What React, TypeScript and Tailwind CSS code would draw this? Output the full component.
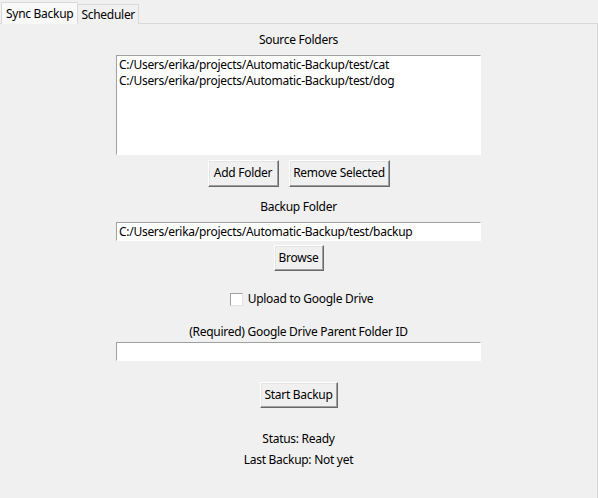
import React, { useState } from 'react';

const font = { fontFamily: '"Noto Sans", "DejaVu Sans", sans-serif' };

const TkButton: React.FC<{ label: string; width: string; height?: string }> = ({ label, width, height = 'h-[27px]' }) => (
  <button
    className={`${width} ${height} flex items-center justify-center pb-[1px] bg-[#f0f0f0] text-[12px] text-black border border-t-white border-l-white border-r-[#696969] border-b-[#696969] shadow-[inset_-1px_-1px_0_#a0a0a0,inset_1px_1px_0_#e3e3e3]`}
  >
    {label}
  </button>
);

const TkEntry: React.FC<{ value: string }> = ({ value }) => (
  <div className="w-[365px] h-[19px] bg-white border border-t-[#a0a0a0] border-l-[#a0a0a0] border-r-white border-b-white flex items-center px-[2px] text-[12px] text-black leading-none whitespace-nowrap overflow-hidden">
    {value}
  </div>
);

export default function App() {
  const [upload, setUpload] = useState(false);
  const folders = [
    'C:/Users/erika/projects/Automatic-Backup/test/cat',
    'C:/Users/erika/projects/Automatic-Backup/test/dog',
  ];

  return (
    <div className="w-[598px] h-[498px] bg-[#f0f0f0] flex flex-col text-black tracking-[-0.28px]" style={font}>
      {/* tab strip */}
      <div className="h-[24px] flex items-end pl-[1px] relative">
        <div className="h-[22px] px-[4px] bg-[#f9f9f9] border border-[#d9d9d9] border-b-0 flex items-center text-[12px] relative z-10">
          Sync Backup
        </div>
        <div className="h-[20px] px-[3px] bg-[#f0f0f0] border border-[#d9d9d9] border-l-0 border-b-0 flex items-center text-[12px]">
          Scheduler
        </div>
      </div>

      {/* panel */}
      <div className="flex-1 border-t border-r border-[#d9d9d9] flex flex-col items-center -mt-px">
        <div className="mt-[7px] h-[18px] flex items-center text-[12px]">Source Folders</div>

        <div className="mt-[6px] w-[365px] h-[100px] bg-white border border-t-[#a0a0a0] border-l-[#a0a0a0] border-r-white border-b-white px-[2px] pt-[1px] text-[12px]">
          {folders.map((f) => (
            <div key={f} className="h-[16px] flex items-center whitespace-nowrap">
              {f}
            </div>
          ))}
        </div>

        <div className="mt-[5px] flex gap-[10px]">
          <TkButton label="Add Folder" width="w-[71px]" />
          <TkButton label="Remove Selected" width="w-[101px]" />
        </div>

        <div className="mt-[11px] h-[18px] flex items-center text-[12px]">Backup Folder</div>
        <div className="mt-[6px]">
          <TkEntry value="C:/Users/erika/projects/Automatic-Backup/test/backup" />
        </div>
        <div className="mt-[4px]">
          <TkButton label="Browse" width="w-[50px]" height="h-[26px]" />
        </div>

        <div className="mt-[19px] h-[18px] flex items-center gap-[5px] text-[12px] pl-[6px]">
          <span
            onClick={() => setUpload(!upload)}
            className="w-[13px] h-[13px] bg-white border border-t-[#a0a0a0] border-l-[#a0a0a0] border-r-[#e3e3e3] border-b-[#e3e3e3] flex items-center justify-center text-[10px] leading-none"
          >
            {upload ? '✓' : ''}
          </span>
          <span>Upload to Google Drive</span>
        </div>

        <div className="mt-[16px] h-[16px] flex items-center text-[12px]">(Required) Google Drive Parent Folder ID</div>
        <div className="mt-[2px]">
          <TkEntry value="" />
        </div>

        <div className="mt-[21px]">
          <TkButton label="Start Backup" width="w-[78px]" height="h-[26px]" />
        </div>

        <div className="mt-[23px] h-[16px] flex items-center text-[12px]">Status: Ready</div>
        <div className="mt-[5px] h-[16px] flex items-center text-[12px]">Last Backup: Not yet</div>
      </div>
    </div>
  );
}
